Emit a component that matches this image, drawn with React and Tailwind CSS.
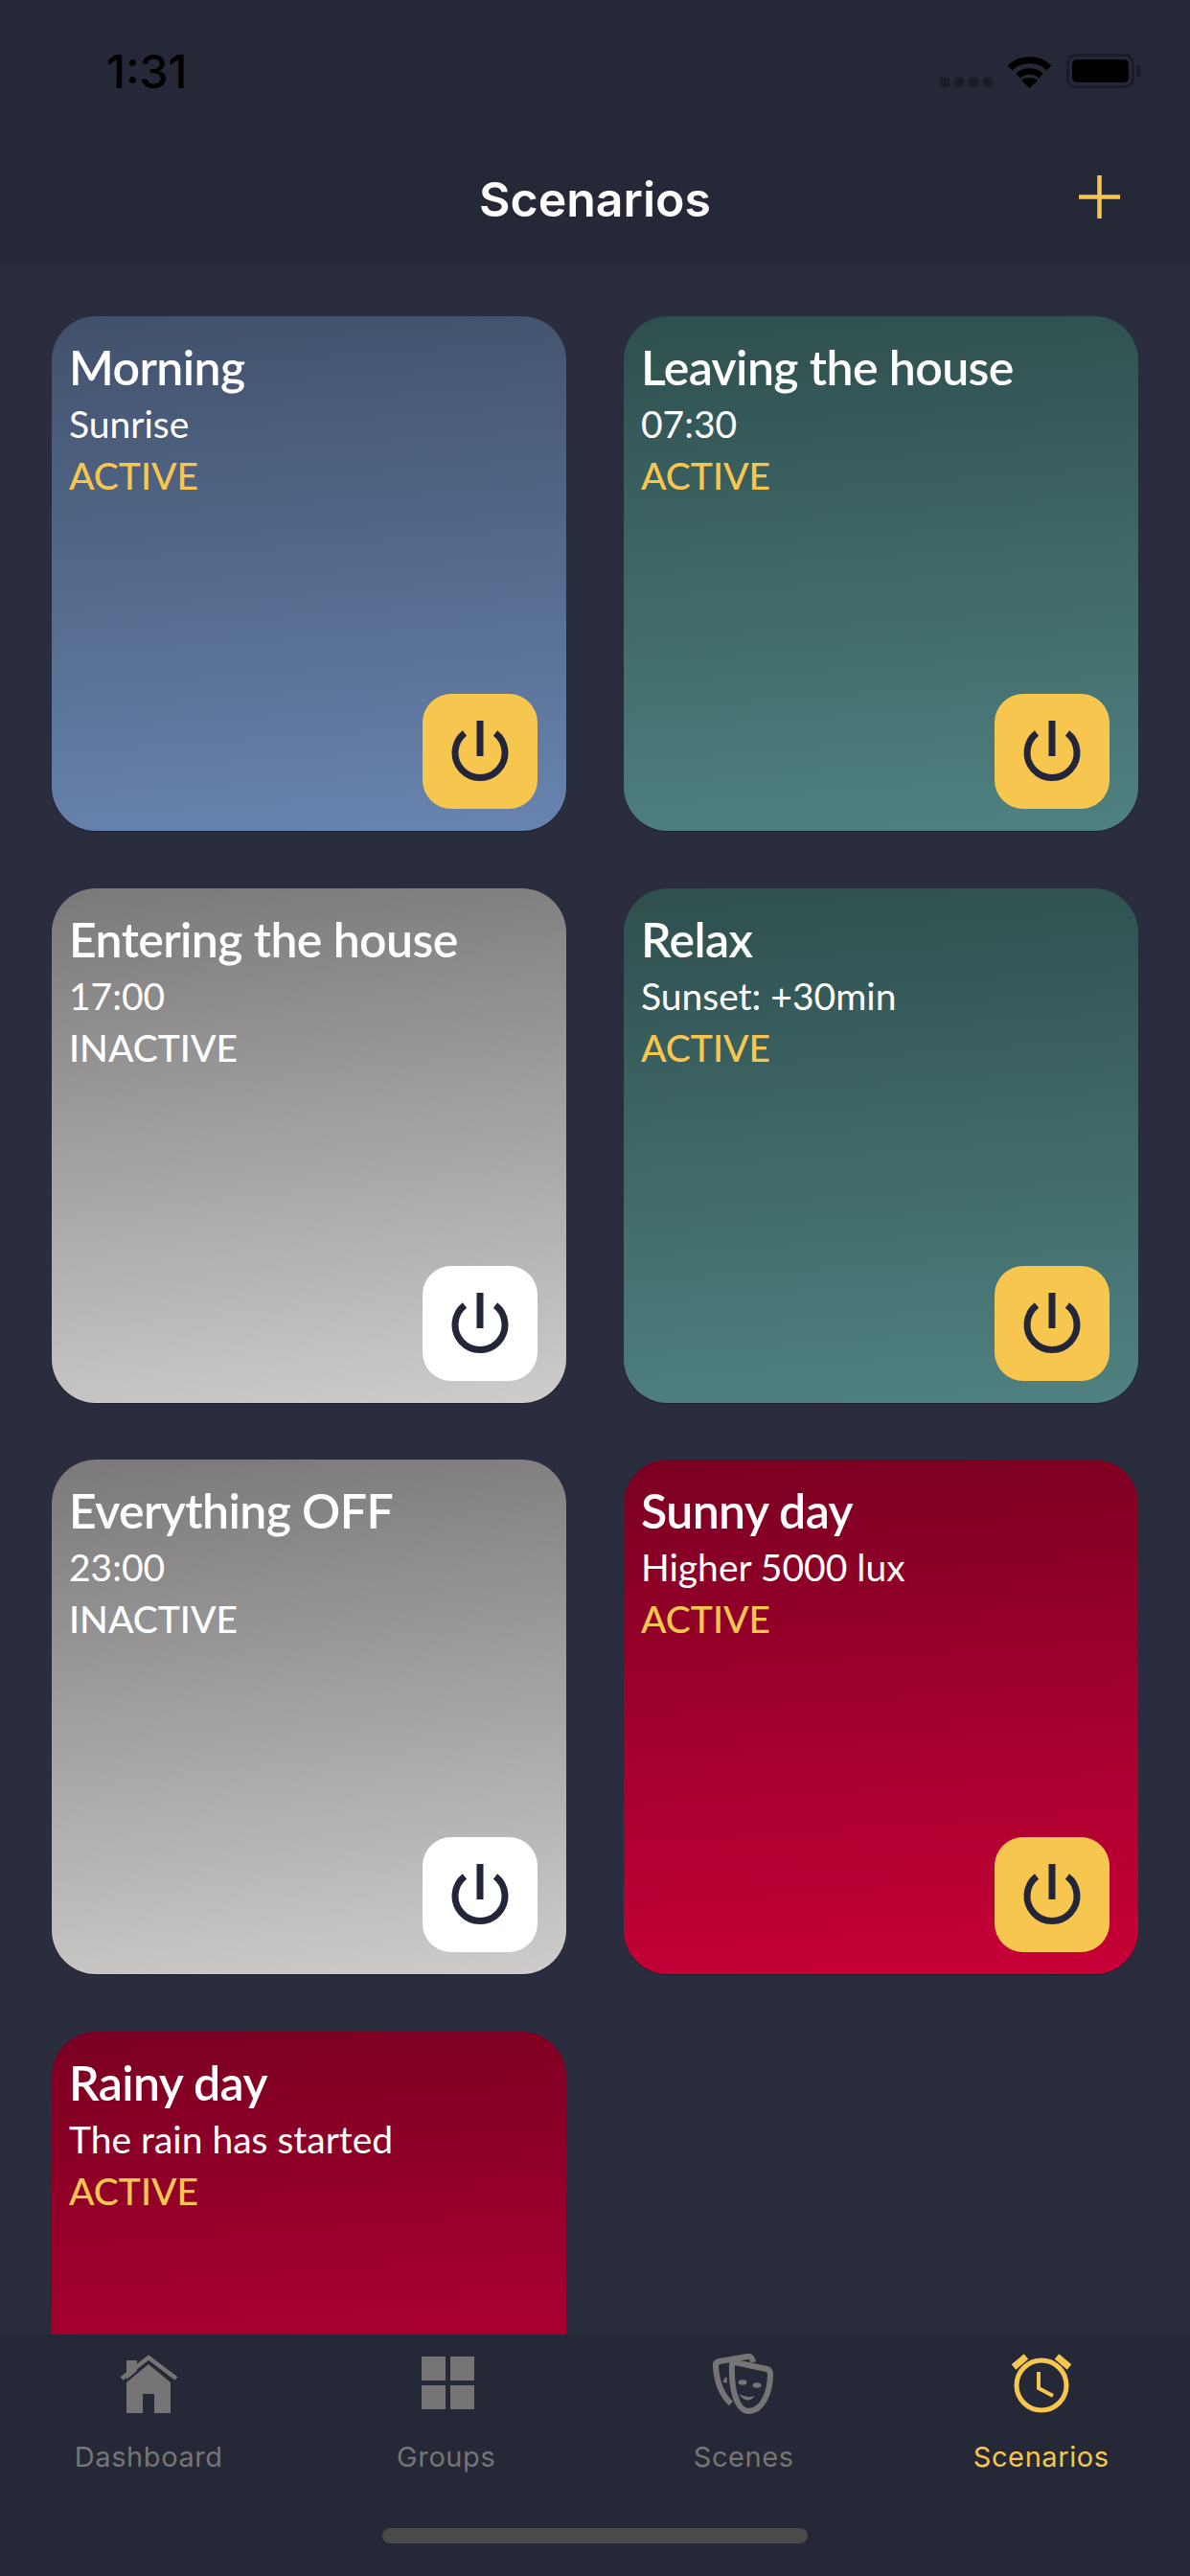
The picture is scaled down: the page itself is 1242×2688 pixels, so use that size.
const cards = [
  { title: "Morning", sub: "Sunrise", active: true, bg: "bg-[linear-gradient(176deg,#41516b,#6884af)]" },
  { title: "Leaving the house", sub: "07:30", active: true, bg: "bg-[linear-gradient(176deg,#2e4f4e,#508181)]" },
  { title: "Entering the house", sub: "17:00", active: false, bg: "bg-[linear-gradient(174deg,#7a7879,#cecdcb)]" },
  { title: "Relax", sub: "Sunset: +30min", active: true, bg: "bg-[linear-gradient(176deg,#2e4f4e,#508181)]" },
  { title: "Everything OFF", sub: "23:00", active: false, bg: "bg-[linear-gradient(174deg,#7a7879,#cecdcb)]" },
  { title: "Sunny day", sub: "Higher 5000 lux", active: true, bg: "bg-[linear-gradient(176deg,#7a0021,#c80038)]" },
  { title: "Rainy day", sub: "The rain has started", active: true, bg: "bg-[linear-gradient(176deg,#7a0021,#c80038)]" },
];

function PowerIcon() {
  return (
    <svg width="64" height="64" viewBox="0 0 64 64" fill="none" stroke="#232638" strokeWidth="7">
      <path d="M16 13A26 26 0 1 0 48 13" />
      <path d="M32 0V37" />
    </svg>
  );
}

function Card({ title, sub, active, bg }) {
  return (
    <div className={`flex h-[537px] flex-col rounded-[46px] pb-[23px] pl-[18px] pr-[30px] pt-[23px] shadow-[0_1px_1px_rgba(0,0,0,0.3)] ${bg}`}>
      <div className="text-[50px] font-semibold leading-[60px] tracking-[-0.6px] text-white">{title}</div>
      <div className="mt-[3px] text-[39px] leading-[52px] text-white">{sub}</div>
      <div className={`mt-[1px] text-[39px] font-medium leading-[54px] ${active ? "text-[#f7c64f]" : "text-white"}`}>
        {active ? "ACTIVE" : "INACTIVE"}
      </div>
      <button className={`mt-auto flex h-[120px] w-[120px] items-center justify-center self-end rounded-[30px] ${active ? "bg-[#f7c64f]" : "bg-white"}`}>
        <PowerIcon />
      </button>
    </div>
  );
}

const HouseIcon = () => (
  <svg width="64" height="64" viewBox="0 0 64 64" fill="#757575">
    <path d="M9 7H20V18L9 27Z" />
    <path d="M32 11L55 30V62H38V42H26V62H9V30Z" />
    <path d="M4 26L32 4L61 26" fill="none" stroke="#757575" strokeWidth="4.5" />
  </svg>
);
const GridIcon = () => (
  <svg width="64" height="64" viewBox="0 0 64 64" fill="#757575">
    <rect x="6" y="3" width="25" height="25" />
    <rect x="36" y="3" width="25" height="25" />
    <rect x="6" y="33" width="25" height="25" />
    <rect x="36" y="33" width="25" height="25" />
  </svg>
);
const MasksIcon = () => (
  <svg width="64" height="64" viewBox="0 0 64 64" fill="none" stroke="#757575" strokeWidth="6" strokeLinejoin="round">
    <path d="M42 9Q41 2 36 3L7 8Q2 9 3 14C4 28 8 42 19 52" />
    <path d="M23 9L56 16Q60 17 60 21C60 40 52 60 37 60C25 59 19 38 20 12Q20 9 23 9Z" />
    <path d="M14 25L12 29L15 29" strokeWidth="2.5" />
    <g fill="#757575" stroke="none">
      <ellipse cx="31" cy="30" rx="4.5" ry="2.8" />
      <ellipse cx="46" cy="33" rx="4.5" ry="2.8" />
      <path d="M27 42Q36 47 44 44Q36 54 27 42Z" />
    </g>
  </svg>
);
const AlarmIcon = () => (
  <svg width="64" height="64" viewBox="0 0 64 64" fill="none" stroke="#f7c64f">
    <circle cx="32" cy="33" r="26" strokeWidth="5" />
    <path d="M29 19V36L44 44" strokeWidth="4" />
    <path d="M3 14L16 3M48 3L61 14" strokeWidth="7" />
  </svg>
);

const tabs = [
  { label: "Dashboard", Icon: HouseIcon },
  { label: "Groups", Icon: GridIcon },
  { label: "Scenes", Icon: MasksIcon },
  { label: "Scenarios", Icon: AlarmIcon, active: true },
];

export default function App() {
  return (
    <div className="flex h-[2688px] w-[1242px] flex-col overflow-hidden bg-[#2a2d3e] font-['Lato','Liberation_Sans',sans-serif]">
      <header className="flex h-[276px] shrink-0 flex-col bg-[#252836] font-['Inter',sans-serif]">
        <div className="flex h-[92px] items-end justify-between pl-[111px] pr-[51px]">
          <span className="-mb-[7px] text-[48px] font-medium leading-[48px] text-black">1:31</span>
          <div className="flex items-end">
            <div className="mb-[1px] mr-[15px] flex gap-[5px]">
              <span className="h-[10px] w-[10px] rounded-[3px] bg-[#1a1c28]" />
              <span className="h-[10px] w-[10px] rounded-[3px] bg-[#1a1c28]" />
              <span className="h-[10px] w-[10px] rounded-[3px] bg-[#1a1c28]" />
              <span className="h-[10px] w-[10px] rounded-[3px] bg-[#1a1c28]" />
            </div>
            <svg className="mr-[15px]" width="47" height="35" viewBox="0 0 47 35" fill="none" stroke="#000">
              <path d="M3 14C14 3 33 3 44 14" strokeWidth="7" />
              <path d="M11.5 22C18 16 29 16 35.5 22" strokeWidth="6.5" />
              <path d="M23.5 35L15 27C20 23 27 23 32 27Z" fill="#000" stroke="none" />
            </svg>
            <div className="flex items-center">
              <div className="h-[36px] w-[71px] rounded-[10px] border-[3px] border-[#1a1c28] p-[3px]">
                <div className="h-full w-full rounded-[5px] bg-black" />
              </div>
              <div className="ml-[2px] h-[12px] w-[5px] rounded-r-[4px] bg-[#1a1c28]" />
            </div>
          </div>
        </div>
        <div className="mt-[92px] flex h-[48px] items-center justify-between pl-[73px] pr-[73px]">
          <span className="h-[43px] w-[43px]" />
          <span className="text-[50px] font-semibold leading-[48px] text-white">Scenarios</span>
          <svg className="-mt-[6px]" width="43" height="45" viewBox="0 0 43 45" stroke="#f7c64f" strokeWidth="4.5">
            <path d="M21.5 0V45M0 22.5H43" />
          </svg>
        </div>
      </header>

      <main className="min-h-0 flex-1 overflow-hidden px-[54px] pt-[54px]">
        <div className="grid grid-cols-2 gap-x-[60px] gap-y-[59.5px]">
          {cards.map((c) => (
            <Card key={c.title} {...c} />
          ))}
        </div>
      </main>

      <nav className="flex h-[252px] shrink-0 flex-col bg-[#252836] font-['Inter',sans-serif]">
        <div className="grid grid-cols-4 pt-[20px]">
          {tabs.map(({ label, Icon, active }) => (
            <div key={label} className="flex flex-col items-center">
              <Icon />
              <span className={`mt-[25px] text-[29px] leading-[38px] tracking-[0.6px] ${active ? "text-[#f7c64f]" : "text-[#757575]"}`}>{label}</span>
            </div>
          ))}
        </div>
        <div className="mx-auto mt-[55px] h-[16px] w-[444px] rounded-full bg-[#4a4a4a]" />
      </nav>
    </div>
  );
}
